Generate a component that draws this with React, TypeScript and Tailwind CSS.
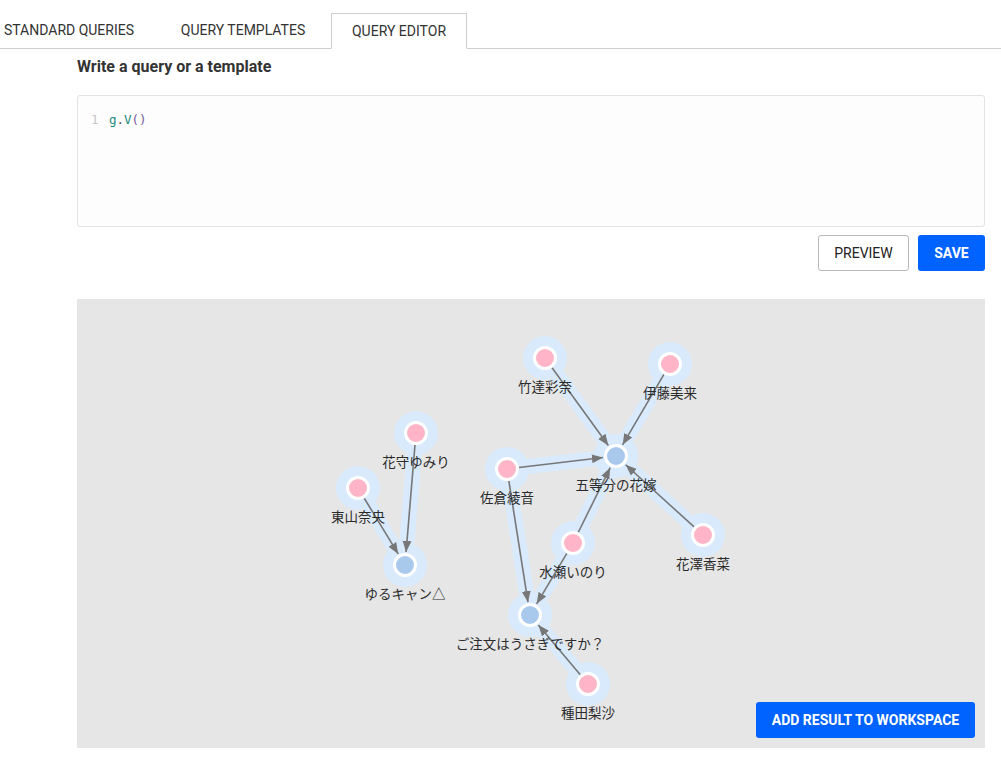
import React from "react";

type Node = { id: string; x: number; y: number; kind: "person" | "title"; label: string };

// page coords minus canvas origin (77, 299)
const OX = 77;
const OY = 299;

const nodes: Node[] = [
  { id: "takatsu", x: 545, y: 358, kind: "person", label: "竹達彩奈" },
  { id: "ito", x: 670, y: 364, kind: "person", label: "伊藤美来" },
  { id: "hanamori", x: 416, y: 433, kind: "person", label: "花守ゆみり" },
  { id: "touyama", x: 358, y: 488, kind: "person", label: "東山奈央" },
  { id: "sakura", x: 507, y: 469, kind: "person", label: "佐倉綾音" },
  { id: "gotoubun", x: 616, y: 456, kind: "title", label: "五等分の花嫁" },
  { id: "minase", x: 573, y: 543, kind: "person", label: "水瀬いのり" },
  { id: "hanazawa", x: 703, y: 535, kind: "person", label: "花澤香菜" },
  { id: "yurucamp", x: 405, y: 565, kind: "title", label: "ゆるキャン△" },
  { id: "gochiusa", x: 530, y: 615, kind: "title", label: "ご注文はうさぎですか？" },
  { id: "taneda", x: 588, y: 684, kind: "person", label: "種田梨沙" },
];

const edges: [string, string][] = [
  ["takatsu", "gotoubun"],
  ["ito", "gotoubun"],
  ["sakura", "gotoubun"],
  ["minase", "gotoubun"],
  ["hanazawa", "gotoubun"],
  ["sakura", "gochiusa"],
  ["minase", "gochiusa"],
  ["taneda", "gochiusa"],
  ["hanamori", "yurucamp"],
  ["touyama", "yurucamp"],
];

const byId = (id: string) => nodes.find((n) => n.id === id)!;

function Graph() {
  return (
    <svg width={908} height={449} viewBox="0 0 908 449" className="block">
      <defs>
        <marker id="arrow" viewBox="0 0 10 10" refX="10" refY="5" markerWidth="7" markerHeight="7" orient="auto">
          <path d="M0,1 L10,5 L0,9 z" fill="#777" />
        </marker>
      </defs>
      {/* halos */}
      <g stroke="#d9eafc" fill="#d9eafc">
        {edges.map(([s, t]) => {
          const a = byId(s);
          const b = byId(t);
          return <line key={s + t} x1={a.x - OX} y1={a.y - OY} x2={b.x - OX} y2={b.y - OY} strokeWidth={15} />;
        })}
        {nodes.map((n) => (
          <circle key={n.id} cx={n.x - OX} cy={n.y - OY} r={22} stroke="none" />
        ))}
      </g>
      {/* edges */}
      <g stroke="#777" strokeWidth={1.6}>
        {edges.map(([s, t]) => {
          const a = byId(s);
          const b = byId(t);
          const dx = b.x - a.x;
          const dy = b.y - a.y;
          const d = Math.hypot(dx, dy);
          const ux = dx / d;
          const uy = dy / d;
          return (
            <line
              key={s + t}
              x1={a.x - OX + ux * 12}
              y1={a.y - OY + uy * 12}
              x2={b.x - OX - ux * 13}
              y2={b.y - OY - uy * 13}
              markerEnd="url(#arrow)"
            />
          );
        })}
      </g>
      {/* nodes */}
      {nodes.map((n) => (
        <g key={n.id}>
          <circle
            cx={n.x - OX}
            cy={n.y - OY}
            r={10.5}
            fill={n.kind === "person" ? "#ffb5c7" : "#a8c9ec"}
            stroke="#fff"
            strokeWidth={3}
          />
          <text
            x={n.x - OX}
            y={n.y - OY + 34}
            textAnchor="middle"
            fontSize={13.5}
            fill="#2b2b2b"
            fontFamily="'Noto Sans CJK JP', 'Noto Sans', sans-serif"
          >
            {n.label}
          </text>
        </g>
      ))}
    </svg>
  );
}

export default function App() {
  return (
    <div className="w-[1001px] h-[757px] overflow-hidden bg-white font-['Roboto',sans-serif] text-[#333]">
      {/* Tabs */}
      <div className="h-[49px] border-b border-[#cfcfcf] flex items-end">
        <div className="ml-[-18px] w-[174px] h-[35px] flex items-center justify-center text-[14px] text-[#333]">
          STANDARD QUERIES
        </div>
        <div className="ml-[3px] w-[168px] h-[35px] flex items-center justify-center text-[14px] text-[#333]">
          QUERY TEMPLATES
        </div>
        <div className="ml-[4px] w-[136px] h-[36px] mb-[-1px] flex items-center justify-center text-[14px] text-[#333] bg-white border border-[#cfcfcf] border-b-white">
          QUERY EDITOR
        </div>
      </div>

      <div className="pl-[77px] pr-[16px]">
        <h2 className="mt-[6px] text-[16px] leading-[24px] font-bold text-[#333]">Write a query or a template</h2>

        {/* Editor */}
        <div className="mt-[16px] h-[132px] border border-[#e3e3e3] rounded-[3px] bg-[#fdfdfd] pt-[15px] pl-[13px] font-['DejaVu_Sans_Mono',monospace] text-[12.5px] leading-[18px]">
          <div className="flex">
            <span className="w-[18px] text-[#c8c8c8]">1</span>
            <span>
              <span className="text-[#1a8c7c]">g</span>
              <span className="text-[#555]">.</span>
              <span className="text-[#1a8c7c]">V</span>
              <span className="text-[#7a5c9e]">()</span>
            </span>
          </div>
        </div>

        {/* Buttons */}
        <div className="mt-[8px] flex justify-end gap-[9px]">
          <button className="w-[91px] h-[36px] rounded-[3px] border border-[#b8b8b8] bg-white text-[14px] font-normal text-[#222]">
            PREVIEW
          </button>
          <button className="w-[67px] h-[36px] rounded-[3px] bg-[#0062ff] text-[14px] font-bold text-white">
            SAVE
          </button>
        </div>

        {/* Graph canvas */}
        <div className="relative mt-[28px] h-[449px] bg-[#e6e6e6]">
          <Graph />
          <button className="absolute right-[10px] bottom-[10px] w-[219px] h-[36px] rounded-[3px] bg-[#0062ff] text-[14px] font-bold text-white">
            ADD RESULT TO WORKSPACE
          </button>
        </div>
      </div>
    </div>
  );
}
